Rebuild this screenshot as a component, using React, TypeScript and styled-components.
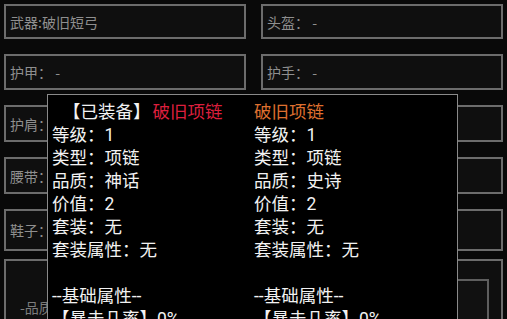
import React from "react";
import styled, { createGlobalStyle } from "styled-components";

const Global = createGlobalStyle`
  html, body { margin: 0; padding: 0; background: #090909; }
  * { box-sizing: border-box; }
`;

const Screen = styled.div`
  position: relative;
  width: 507px;
  height: 319px;
  overflow: hidden;
  background: #090909;
  padding: 4px 4px 0 4px;
  font-family: "Noto Sans CJK SC", "Noto Sans", sans-serif;
`;

const SlotGrid = styled.div`
  display: grid;
  grid-template-columns: 242px 242px;
  grid-template-rows: 35px 36px 37px 37px 42px;
  column-gap: 15px;
  row-gap: 15px;
`;

const Slot = styled.div`
  border: 2px solid #6c6c6c;
  background: #0f0f0f;
  display: flex;
  align-items: center;
  padding-left: 4px;
  color: #8f8f8f;
  font-size: 14px;
  white-space: nowrap;
  overflow: hidden;
`;

const BottomRow = styled.div`
  display: grid;
  grid-template-columns: 242px 242px;
  column-gap: 15px;
  margin-top: 8px;
  height: 80px;
`;

const BigPanel = styled.div`
  border: 2px solid #6c6c6c;
  background: #0f0f0f;
  padding: 18px 12px 0 14px;
  color: #7d7d7d;
  font-size: 14px;
  display: flex;
  flex-direction: column;
`;

const Inner = styled.div`
  flex: 1;
  border: 2px solid #5e5e5e;
  background: #111;
`;

const PanelText = styled.div`
  margin-top: 18px;
`;

const Tooltip = styled.div`
  position: absolute;
  left: 47px;
  top: 94px;
  width: 411px;
  height: 260px;
  background: #000;
  border: 1px solid #8a8a8a;
  padding: 6px 0 0 4px;
  display: grid;
  grid-template-columns: 202px 1fr;
  font-family: Roboto, "Noto Sans CJK SC", sans-serif;
  font-size: 17.5px;
  line-height: 23px;
  color: #f2f2f2;
`;

const Col = styled.div`
  display: flex;
  flex-direction: column;
  white-space: nowrap;
`;

const Line = styled.div<{ $indent?: number }>`
  height: 23px;
  padding-left: ${(p) => p.$indent ?? 0}px;
`;

const Name = styled.span<{ $color: string; $gap: number }>`
  color: ${(p) => p.$color};
  margin-left: ${(p) => p.$gap}px;
`;

type Item = { head?: string; name: string; color: string; quality: string };

const items: Item[] = [
  { head: "【已装备】", name: "破旧项链", color: "#dc1f3d", quality: "神话" },
  { name: "破旧项链", color: "#de6f2f", quality: "史诗" },
];

function ItemCol({ item }: { item: Item }) {
  return (
    <Col>
      <Line $indent={item.head ? 11 : 0}>
        {item.head}
        <Name $color={item.color} $gap={item.head ? 2 : 0}>
          {item.name}
        </Name>
      </Line>
      <Line>等级：1</Line>
      <Line>类型：项链</Line>
      <Line>品质：{item.quality}</Line>
      <Line>价值：2</Line>
      <Line>套装：无</Line>
      <Line>套装属性：无</Line>
      <Line />
      <Line>--基础属性--</Line>
      <Line>【暴击几率】0%</Line>
    </Col>
  );
}

const slots = [
  "武器:破旧短弓",
  "头盔： -",
  "护甲： -",
  "护手： -",
  "护肩： -",
  "戒指： -",
  "腰带： -",
  "项链： -",
  "鞋子： -",
  "饰品： -",
];

export default function App() {
  return (
    <>
      <Global />
      <Screen>
        <SlotGrid>
          {slots.map((s) => (
            <Slot key={s}>{s}</Slot>
          ))}
        </SlotGrid>
        <BottomRow>
          <BigPanel>
            <PanelText>-品质-</PanelText>
          </BigPanel>
          <BigPanel>
            <Inner />
          </BigPanel>
        </BottomRow>
        <Tooltip>
          {items.map((it, i) => (
            <ItemCol key={i} item={it} />
          ))}
        </Tooltip>
      </Screen>
    </>
  );
}
